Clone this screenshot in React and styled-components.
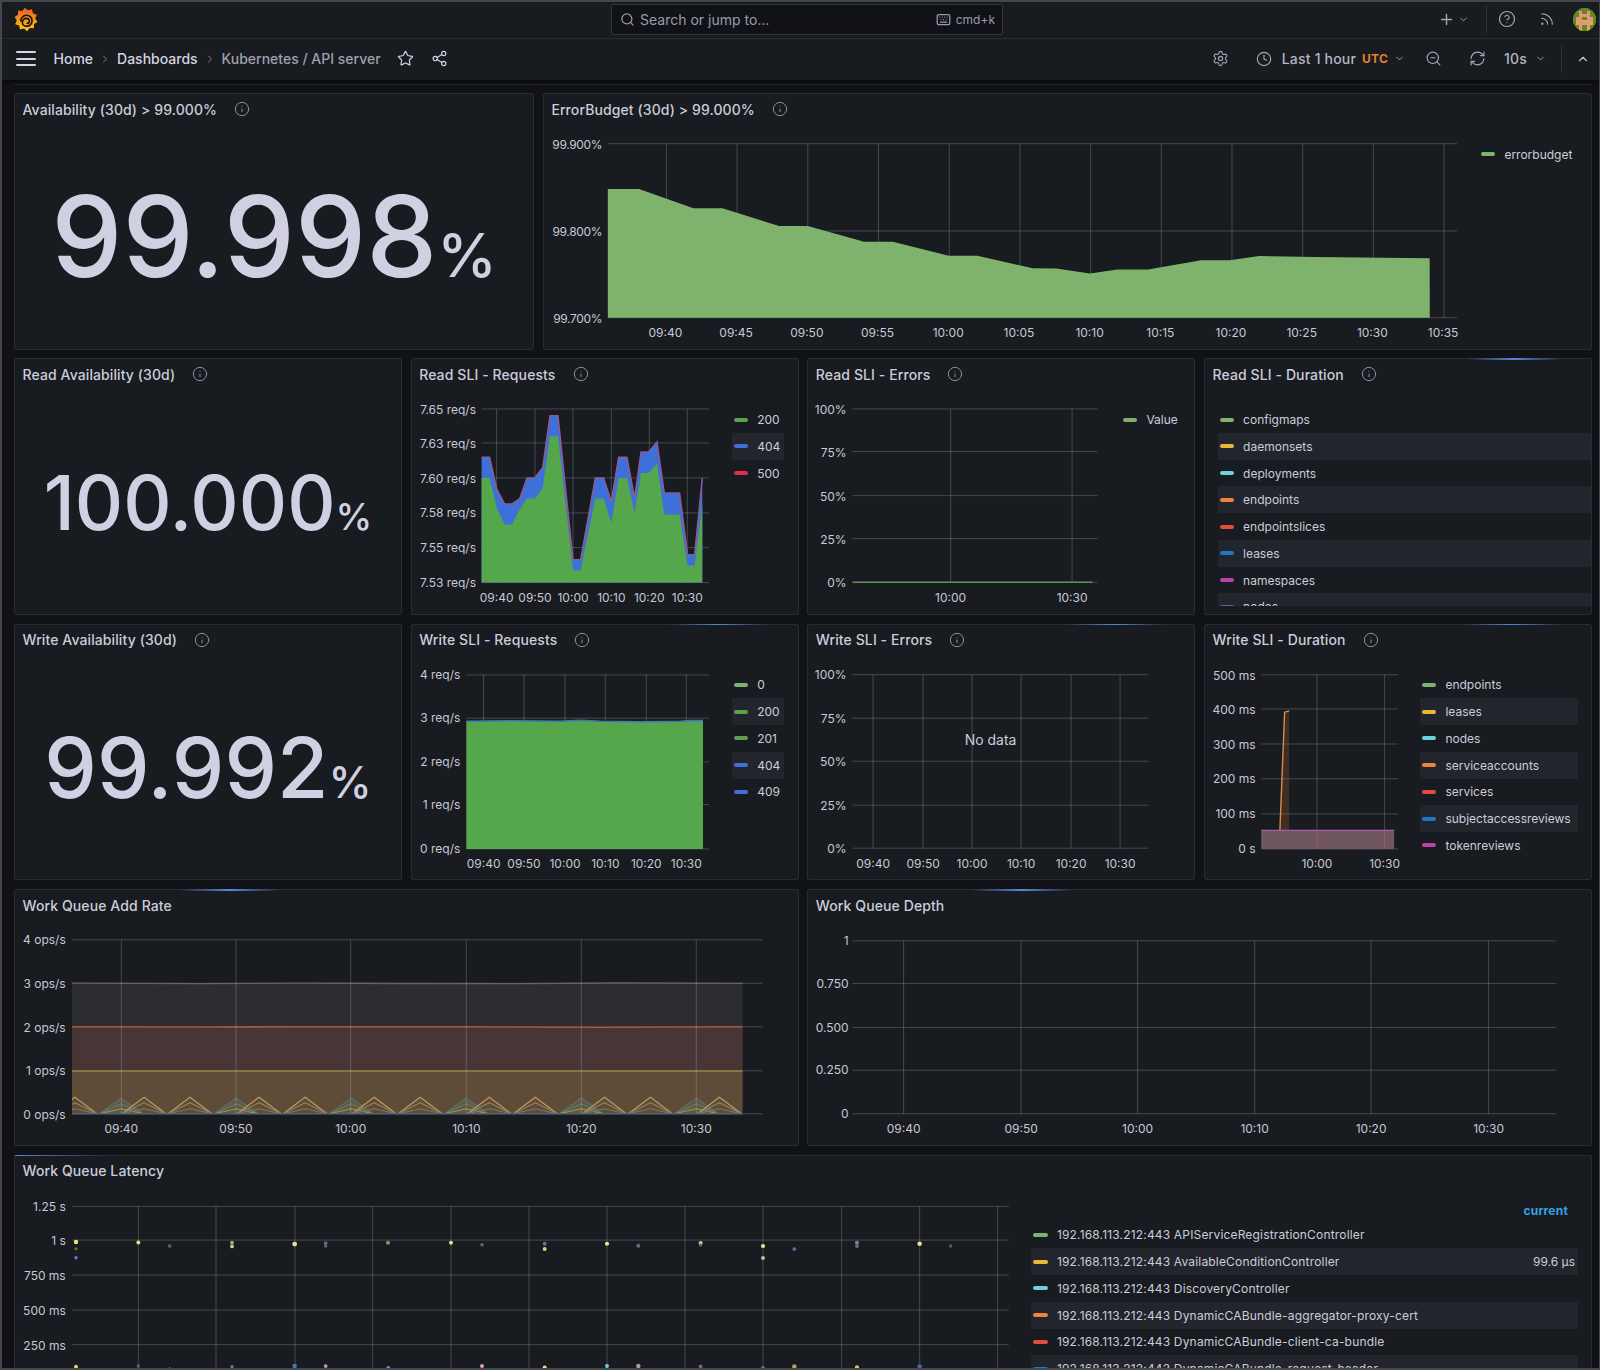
import React from 'react';
import styled, { createGlobalStyle } from 'styled-components';
import { Search, Keyboard, Plus, ChevronDown, ChevronRight, ChevronUp, CircleHelp, Rss, Star, Share2, Settings, Clock, ZoomOut, RefreshCw, Info } from 'lucide-react';

const Global = createGlobalStyle`
  html, body { margin: 0; padding: 0; background: #111217; }
  * { box-sizing: border-box; }
`;

const Root = styled.div`
  width: 1600px; height: 1370px; overflow: hidden;
  border: 2px solid #45464b; border-right-width: 1px;
  background: #111217; color: #ccccdc;
  font-family: Inter, "Noto Sans", sans-serif;
`;
const TopBar = styled.header`
  height: 37px; display: flex; align-items: center; padding-bottom: 2px;
  background: #181b1f; border-bottom: 1px solid #2b2d32;
`;
const LogoSlot = styled.div`
  width: 609px; height: 100%; display: flex; align-items: center; padding-left: 12px;
`;
const SearchBox = styled.div`
  width: 392px; height: 31px; display: flex; align-items: center;
  background: #111217; border: 1px solid #33353a; border-radius: 2px;
  padding: 0 7px 0 8px; color: #9a9ba8; font-size: 14px;
`;
const SearchText = styled.span`margin-left: 5px; flex: 1;`;
const Shortcut = styled.span`font-size: 12px; margin-left: 5px;`;
const TopRight = styled.div`
  flex: 1; display: flex; justify-content: flex-end; align-items: center; padding-right: 3px; color: #a5a6b3;
`;
const Nudge = styled.span`
  display: inline-flex; align-items: center; margin-left: ${p => p.$ml || 0}px; color: ${p => p.$color || 'inherit'};
`;
const VRule = styled.span`
  width: 1px; height: ${p => p.$h}px; background: #2f3136; margin-left: ${p => p.$ml}px;
`;
const NavBar = styled.nav`
  height: 41px; display: flex; align-items: center; padding: 0 9px 2px 14px;
  background: #181b1f; box-shadow: 0 2px 3px rgba(0,0,0,.5); position: relative;
`;
const Burger = styled.span`
  width: 20px; display: flex; flex-direction: column; gap: 4.5px; margin-right: 17.5px;
`;
const BurgerBar = styled.span`height: 2px; background: #d6d6e2; border-radius: 1px;`;
const Crumb = styled.span`
  font-size: 14px; font-weight: 500; color: ${p => p.$dim ? '#9fa0ad' : '#d4d4e0'};
`;
const CrumbSep = styled.span`
  display: inline-flex; width: 24px; justify-content: center; color: #7d7e8a;
`;
const NavSpacer = styled.span`flex: 1;`;
const NavText = styled.span`
  font-size: 14px; font-weight: 500; letter-spacing: .2px; color: ${p => p.$color || '#b5b6c3'}; margin-left: ${p => p.$ml || 0}px;
  ${p => p.$small && 'font-size: 12px; font-weight: 700;'}
`;
const Scroller = styled.main`
  margin: 4px 7px 0 12px; border-top: 1px solid #212327; padding-top: 8px;
`;
const Dashboard = styled.div`
  display: grid; grid-template-columns: repeat(24, 1fr); grid-auto-rows: 256.7px; gap: 8.7px;
`;
const Panel = styled.section`
  grid-column: span ${p => p.$span};
  position: relative; display: flex; flex-direction: column; min-width: 0;
  background: #181b1f; border: 1px solid #2a2c31; border-radius: 2px;
  ${p => p.$glow !== undefined && `
    &::before {
      content: ''; position: absolute; top: -1px; height: 1.5px;
      left: ${p.$glow}px; width: ${p.$glowW}px;
      background: linear-gradient(90deg, ${p.$glow === 0 ? '#5a86d8' : 'transparent'}, ${p.$glow === 0 ? 'transparent' : '#5a86d8, transparent'});
    }
  `}
`;
const PanelHeader = styled.div`
  height: 32px; flex: none; display: flex; align-items: center; padding: 0 7.5px 2px;
`;
const PanelTitle = styled.h2`
  margin: 0; font-size: 14px; font-weight: 500; letter-spacing: .1px; color: #ccccdc; white-space: nowrap;
`;
const InfoMark = styled(Info)`
  width: 16px; height: 16px; margin-left: 17px; color: #8e8f9c;
`;
const PanelBody = styled.div`
  flex: 1; min-height: 0; display: flex; overflow: hidden;
`;
const StatBody = styled.div`
  flex: 1; display: flex; align-items: center; justify-content: center; padding-bottom: 1px;
`;
const StatValue = styled.span`
  font-size: ${p => p.$size}px; font-weight: 500; line-height: 1; color: #d0d0e2; white-space: nowrap;
`;
const StatUnit = styled.span`
  font-size: ${p => p.$size}px;
`;
const ChartSvg = styled.svg`display: block; flex: none;`;
const AxisLabel = styled.text`
  font-family: Inter, sans-serif; font-size: 12px; fill: #c8c8d6; letter-spacing: ${p => p.$track || 0}px;
`;
const NoData = styled.text`
  font-family: Inter, sans-serif; font-size: 14px; fill: #ccccdc;
`;
const Legend = styled.ul`
  list-style: none; margin: 0; padding: ${p => p.$top ?? 14.8}px 0 0 ${p => p.$left || 0}px;
  flex: none; width: ${p => p.$width}px; ${p => p.$clip && `height: ${p.$clip}px; overflow: hidden;`}
`;
const LegendRow = styled.li`
  height: 26.75px; display: flex; align-items: center; padding: 0 3px 0 2px; font-size: 12px; color: #ccccdc; white-space: nowrap;
  &:nth-child(even) { background: #22252b; }
`;
const Swatch = styled.i`
  width: 14.5px; height: 4px; border-radius: 2px; margin-right: 9px; flex: none; background: ${p => p.$color};
`;
const RowLabel = styled.span`flex: 1; letter-spacing: ${p => p.$track || 0}px;`;
const RowValue = styled.span`color: #ccccdc;`;
const LegendHead = styled.div`
  height: 22.5px; display: flex; align-items: center; justify-content: flex-end; padding-right: 10px;
  font-size: 12px; font-weight: 700; letter-spacing: .2px; color: #33a2e5;
`;
const LegendTable = styled.div`flex: none; width: 546.6px; padding-top: 11.5px;`;
const LegendList = styled.ul`list-style: none; margin: 0; padding: 0;`;

const PAL = { green: '#7eb26d', yellow: '#eab839', cyan: '#6ed0e0', orange: '#ef843c', red: '#e24d42', blue: '#1f78c1', pink: '#ba43a9', purple: '#705da0' };

const z = (ox, oy, pts, sx = 3, sy = 3) => pts.map(([x, y]) => `${(ox + x / sx).toFixed(1)},${(oy + y / sy).toFixed(1)}`).join(' ');
const GRID = 'rgba(204,204,220,0.26)';

const GridLines = ({ hs = [], vs = [], x1, x2, y1, y2 }) => (
  <g stroke={GRID} strokeWidth="1">
    {hs.map(y => <line key={'h' + y} x1={x1} x2={x2} y1={y} y2={y} />)}
    {vs.map(x => <line key={'v' + x} x1={x} x2={x} y1={y1} y2={y2} />)}
  </g>
);
const YLabels = ({ x, items, track }) => items.map(([t, y]) => (
  <AxisLabel key={t} x={x} y={y + 4.3} textAnchor="end" $track={track}>{t}</AxisLabel>
));
const XLabels = ({ y, items }) => items.map(([t, x]) => (
  <AxisLabel key={t} x={x} y={y + 4.3} textAnchor="middle">{t}</AxisLabel>
));
const Chart = ({ box, children }) => (
  <ChartSvg width={box[2]} height={box[3]} viewBox={box.join(' ')}>{children}</ChartSvg>
);

const GrafanaLogo = () => {
  const pts = [];
  const n = 10;
  for (let i = 0; i < n * 2; i++) {
    const a = (i / (n * 2)) * Math.PI * 2 - Math.PI / 2 - 0.1;
    const r = i % 2 === 0 ? 11.8 : 9.3;
    pts.push(`${(12 + r * Math.cos(a)).toFixed(2)},${(12.4 + r * Math.sin(a)).toFixed(2)}`);
  }
  return (
    <svg width="24" height="25" viewBox="0 0 24 25">
      <defs>
        <linearGradient id="gflogo" x1="0" y1="0" x2="0" y2="1">
          <stop offset="0" stopColor="#f05a28" />
          <stop offset="1" stopColor="#fbca0a" />
        </linearGradient>
      </defs>
      <polygon points={pts.join(' ')} fill="url(#gflogo)" />
      <path d="M6.9 14a5.6 5.6 0 1 1 5.8 5.4c-2.6 0-4.3-1.9-4.3-4.1a3.9 3.9 0 0 1 3.9-3.9c1.9 0 3.1 1.3 3.1 2.8 0 1.2-.9 2.2-2.2 2.2" fill="none" stroke="#17130f" strokeWidth="1.6" strokeLinecap="round" />
    </svg>
  );
};

const AVATAR = [
  '..gggg..',
  '.gPggPg.',
  'ggPPPPgg',
  'gPPggPPg',
  'gPPyyPPg',
  'gyPPPPyg',
  '.gPggPg.',
  '..yggy..',
];
const AVATAR_COLORS = { g: '#5f8a22', P: '#e9937c', y: '#d8b03a' };
const Avatar = () => (
  <svg width="23" height="23" viewBox="0 0 8 8" shapeRendering="crispEdges">
    <defs><clipPath id="avatarclip"><circle cx="4" cy="4" r="4" /></clipPath></defs>
    <g clipPath="url(#avatarclip)">
      <rect width="8" height="8" fill="#5f8a22" />
      {AVATAR.flatMap((row, y) => row.split('').map((c, x) => AVATAR_COLORS[c] ? <rect key={x + '-' + y} x={x} y={y} width="1" height="1" fill={AVATAR_COLORS[c]} /> : null))}
    </g>
  </svg>
);

const ErrorBudgetChart = () => {
  const first = [[203, 297], [297, 297], [460, 355], [547, 355], [717, 408], [803, 408], [972, 455], [1058, 455], [1226, 497], [1312, 497], [1478, 535]];
  const rest = [[1035, 263], [1068, 268], [1095, 264], [1125, 264], [1177, 255], [1205, 255], [1234, 251], [1290, 252], [1401, 253]];
  const pts = z(540, 90, first) + ' ' + rest.map(([x, y]) => `${(x * 1.0204).toFixed(1)},${(y * 1.0204).toFixed(1)}`).join(' ');
  const xs = Array.from({ length: 12 }, (_, i) => 666.3 + 70.7 * i);
  const labels = ['09:40', '09:45', '09:50', '09:55', '10:00', '10:05', '10:10', '10:15', '10:20', '10:25', '10:30', '10:35'];
  return (
    <Chart box={[543.9, 126.0, 935, 222.7]}>
      <GridLines hs={[143.7, 231, 317.7]} vs={xs} x1={607.7} x2={1457} y1={143.7} y2={317.7} />
      <polygon points={`607.7,317.7 ${pts} 1429.7,317.7`} fill="#7eb26d" />
      <YLabels x={602} track={-0.35} items={[['99.900%', 144.6], ['99.800%', 231.9], ['99.700%', 318.6]]} />
      <XLabels y={333} items={labels.map((t, i) => [t, xs[i] - 1])} />
    </Chart>
  );
};

const ReadRequestsChart = () => {
  const top = [[244, 308], [268, 308], [290, 405], [313, 448], [335, 448], [358, 433], [380, 370], [403, 370], [427, 340], [449, 183], [473, 183], [518, 615], [541, 615], [585, 370], [610, 370], [633, 440], [655, 308], [680, 308], [703, 430], [722, 292], [745, 292], [770, 262], [792, 415], [838, 415], [862, 600], [883, 600], [906, 370]];
  const mid = [[244, 370], [268, 370], [290, 462], [313, 510], [335, 510], [358, 465], [380, 432], [403, 432], [427, 402], [449, 245], [473, 245], [518, 648], [541, 648], [585, 432], [610, 432], [633, 505], [655, 370], [680, 370], [703, 475], [722, 355], [745, 355], [770, 327], [792, 480], [838, 480], [862, 633], [883, 633], [906, 450]];
  const base = [[906, 684], [244, 684]];
  const xs = [496.3, 534.7, 572.7, 611, 649, 687];
  const labels = ['09:40', '09:50', '10:00', '10:10', '10:20', '10:30'];
  return (
    <Chart box={[411.7, 391.4, 320, 222.7]}>
      <GridLines hs={[409.3, 443.3, 478.3, 513.3, 548, 583]} vs={xs} x1={481.3} x2={709} y1={409.3} y2={583} />
      <polygon points={z(400, 355, [...top, ...base])} fill="#3d71d9" />
      <polygon points={z(400, 355, [...mid, ...base])} fill="#56a64b" />
      <polyline points={z(400, 355, top)} fill="none" stroke="#94598f" strokeWidth="1.4" />
      <YLabels x={475.7} items={[['7.65 req/s', 409.8], ['7.63 req/s', 444.5], ['7.60 req/s', 479], ['7.58 req/s', 513.5], ['7.55 req/s', 548.3], ['7.53 req/s', 583]]} />
      <XLabels y={598} items={labels.map((t, i) => [t, xs[i]])} />
    </Chart>
  );
};

const ReadErrorsChart = () => (
  <Chart box={[808.4, 391.4, 312.6, 222.7]}>
    <GridLines hs={[409.3, 452, 496, 539, 582.7]} vs={[951, 1072.5]} x1={853} x2={1098} y1={409.3} y2={582.7} />
    <line x1={853} x2={1093} y1={582.7} y2={582.7} stroke="#5f8f52" strokeWidth="1.4" />
    <YLabels x={847} items={[['100%', 410.2], ['75%', 452.9], ['50%', 496.9], ['25%', 539.9], ['0%', 583.6]]} />
    <XLabels y={598.5} items={[['10:00', 951], ['10:30', 1072.5]]} />
  </Chart>
);

const WriteRequestsChart = () => {
  const xs = [483.3, 523.7, 564.7, 605, 646, 686];
  const labels = ['09:40', '09:50', '10:00', '10:10', '10:20', '10:30'];
  const surface = '466,721 510,720.6 560,721 580,720 600,721 640,721.5 680,721 690,720.4 702.7,720.4';
  return (
    <Chart box={[411.7, 656.8, 320, 222.7]}>
      <GridLines hs={[674.7, 718, 761.7, 804.3, 848.7]} vs={xs} x1={466} x2={709} y1={674.7} y2={848.7} />
      <polygon points={`${surface} 702.7,848.7 466,848.7`} fill="#56a64b" />
      <polyline points={surface} fill="none" stroke="#3f78b5" strokeWidth="1.6" />
      <YLabels x={460} items={[['4 req/s', 675], ['3 req/s', 718], ['2 req/s', 762], ['1 req/s', 804.7], ['0 req/s', 848.7]]} />
      <XLabels y={864} items={labels.map((t, i) => [t, xs[i]])} />
    </Chart>
  );
};

const WriteErrorsChart = () => {
  const xs = [873.5, 923.5, 972.5, 1021.5, 1071.5, 1120.5];
  const labels = ['09:40', '09:50', '10:00', '10:10', '10:20', '10:30'];
  return (
    <Chart box={[808.4, 656.8, 386, 222.7]}>
      <GridLines hs={[674.5, 718, 761, 805, 848]} vs={xs} x1={853} x2={1149} y1={674.5} y2={848} />
      <YLabels x={847} items={[['100%', 675], ['75%', 718.5], ['50%', 761.5], ['25%', 805.5], ['0%', 848.6]]} />
      <XLabels y={864} items={labels.map((t, i) => [t, xs[i]])} />
      <NoData x={991} y={744.5} textAnchor="middle">No data</NoData>
    </Chart>
  );
};

const WriteDurationChart = () => (
  <Chart box={[1205.1, 656.8, 214.9, 222.7]}>
    <GridLines hs={[674.6, 708.7, 743.8, 778.6, 813.7, 848.8]} vs={[1317, 1384.7]} x1={1261.3} x2={1398.3} y1={674.6} y2={848.8} />
    <polygon points="1280,830 1284.7,712 1289.3,710.7 1289.3,830" fill="rgba(239,132,60,.18)" />
    <rect x={1261.3} y={830.2} width={133} height={18.6} fill="#6f5660" />
    <line x1={1317} x2={1317} y1={830.2} y2={848.8} stroke="rgba(239,132,60,.25)" />
    <line x1={1384.7} x2={1384.7} y1={830.2} y2={848.8} stroke="rgba(239,132,60,.25)" />
    <polyline points="1280,830 1284.7,712 1289.3,710.7" fill="none" stroke="#d98a55" strokeWidth="1.4" />
    <line x1={1261.3} x2={1394.3} y1={830.2} y2={830.2} stroke="#ad5ca6" strokeWidth="1.4" />
    <YLabels x={1255.7} items={[['500 ms', 675.4], ['400 ms', 710], ['300 ms', 744.5], ['200 ms', 779], ['100 ms', 814], ['0 s', 849]]} />
    <XLabels y={863.6} items={[['10:00', 1317], ['10:30', 1384.7]]} />
  </Chart>
);

const Peak = ({ cx, h, color, fill }) => (
  <polyline points={`${cx - 22},1114 ${cx},${1114 - h} ${cx + 22},1114`} fill={fill || 'none'} stroke={color} strokeWidth="1.2" />
);
const AddRateChart = () => {
  const xs = [121.3, 236, 350.7, 466.3, 581.3, 696.3];
  const labels = ['09:40', '09:50', '10:00', '10:10', '10:20', '10:30'];
  const orange = [];
  for (let k = 0; k < 6; k++) orange.push(144 + 115.1 * k);
  for (let k = -1; k < 5; k++) orange.push(190 + 115.1 * k);
  const gray = [0, 1, 2, 3, 4, 5].map(k => 121.3 + 115 * k);
  return (
    <Chart box={[15, 922.2, 782.6, 222.7]}>
      <defs><clipPath id="addrate"><rect x={72} y={975} width={670.7} height={145} /></clipPath></defs>
      <GridLines hs={[940, 983.5, 1027, 1071, 1114]} x1={72} x2={762.7} />
      <rect x={72} y={983.5} width={670.7} height={43.5} fill="#2c2d33" />
      <rect x={72} y={1027} width={670.7} height={44} fill="#4a3536" />
      <rect x={72} y={1071} width={670.7} height={43} fill="#5e4c38" />
      <g clipPath="url(#addrate)">
        {gray.map(c => (
          <g key={c}>
            <Peak cx={c} h={15.5} color="#5a7068" fill="rgba(95,122,114,.25)" />
            <Peak cx={c} h={10} color="#66805a" />
            <Peak cx={c} h={5} color="#a09458" />
          </g>
        ))}
        {orange.map(c => (
          <g key={c}>
            <Peak cx={c} h={16.5} color="#c39a5a" />
            <Peak cx={c} h={11} color="#8f7f60" />
            <Peak cx={c} h={5} color="#85745f" />
          </g>
        ))}
      </g>
      <polyline points="72,983.4 200,983.8 300,983.3 400,983.7 520,983.9 620,983.2 742.7,983.5" fill="none" stroke="#6f6068" strokeWidth="1.3" />
      <polyline points="72,1027 200,1027.2 300,1026.9 460,1027 600,1027.4 742.7,1027" fill="none" stroke="#a8593f" strokeWidth="1.6" />
      <line x1={72} x2={742.7} y1={1071.2} y2={1071.2} stroke="#85774a" strokeWidth="2" />
      <line x1={72} x2={742.7} y1={1114} y2={1114} stroke="#4d6474" strokeWidth="1.6" />
      <GridLines vs={xs} y1={940} y2={1114} />
      <YLabels x={65.7} items={[['4 ops/s', 940], ['3 ops/s', 983.5], ['2 ops/s', 1027.5], ['1 ops/s', 1070.5], ['0 ops/s', 1114.5]]} />
      <XLabels y={1129.3} items={labels.map((t, i) => [t, xs[i]])} />
    </Chart>
  );
};

const DepthChart = () => {
  const xs = [904, 1021.5, 1138, 1255, 1371.5, 1489];
  const labels = ['09:40', '09:50', '10:00', '10:10', '10:20', '10:30'];
  return (
    <Chart box={[808.4, 922.2, 783, 222.7]}>
      <GridLines hs={[941, 983.7, 1027.6, 1070.4, 1114]} vs={xs} x1={853} x2={1556} y1={941} y2={1114} />
      <YLabels x={849} items={[['1', 941], ['0.750', 983.7], ['0.500', 1027.6], ['0.250', 1070.4], ['0', 1114]]} />
      <XLabels y={1129.3} items={labels.map((t, i) => [t, xs[i]])} />
    </Chart>
  );
};

const DOTS_L = [[228, 725, '#eee58a', 2.2], [228, 745, '#5f7a3c', 1.6], [228, 772, '#7f6fc0', 1.7], [415, 726, '#e8dc8a', 2], [509, 737, '#5d6a6a', 1.7], [696, 727, '#7cc07a', 1.9], [696, 738, '#c8cf80', 1.9], [884, 731, '#e8e090', 2.4], [977, 728, '#6468a8', 1.9], [977, 737, '#5d6a6a', 1.7], [1164, 727, '#7a9a58', 2.1], [1353, 727, '#e8e090', 2], [1446, 733, '#50706a', 1.8], [228, 1099, '#dfe05c', 1.9], [415, 1097, '#585c98', 1.7], [509, 1106, '#c8c8c8', 1.5], [696, 1098, '#6a6a80', 1.7], [696, 1106, '#c8c8c8', 1.5], [884, 1097, '#3d78c0', 2.2], [977, 1097, '#d88ac8', 1.9], [1165, 1103, '#5f90d0', 2], [1446, 1097, '#e09aa8', 2]];
const DOTS_R = [[134, 190, '#706ca0', 2], [134, 206, '#c8d880', 2], [321, 190, '#f0e090', 2.1], [415, 196, '#666a80', 2], [602, 188, '#c8c8a0', 2.1], [602, 194, '#6a6a60', 1.6], [789, 197, '#e8dc90', 2.1], [789, 233, '#b8c880', 2], [883, 206, '#6468b0', 1.9], [1071, 187, '#808078', 2.1], [1071, 197, '#6a6ca0', 1.9], [1259, 190, '#efe090', 2.3], [1352, 197, '#505a58', 1.8], [134, 561, '#efe090', 2], [321, 557, '#6ec8e8', 2], [415, 557, '#a8a0a0', 2.2], [602, 558, '#70707a', 1.9], [789, 563, '#4878b0', 2], [883, 558, '#b0a860', 2.2], [1071, 561, '#f0b860', 2.1], [1259, 558, '#4868a0', 2.2], [1352, 568, '#c8c8c8', 1.5]];
const LatencyChart = () => {
  const xs = [138.3, 216, 295, 372.7, 451, 529, 607, 685, 763, 841.7, 919.7, 997.7];
  return (
    <Chart box={[15, 1187.6, 1016.4, 222.7]}>
      <GridLines hs={[1206, 1239.7, 1274.7, 1309.7, 1344.3, 1379]} vs={xs} x1={72} x2={1008.8} y1={1206} y2={1379} />
      {DOTS_L.map(([x, y, c, r], i) => <circle key={'l' + i} cx={x / 3} cy={1000 + y / 3} r={r} fill={c} />)}
      {DOTS_R.map(([x, y, c, r], i) => <circle key={'r' + i} cx={500 + x / 3} cy={1180 + y / 3} r={r} fill={c} />)}
      <YLabels x={65.7} items={[['1.25 s', 1206], ['1 s', 1240.5], ['750 ms', 1275], ['500 ms', 1310], ['250 ms', 1345]]} />
    </Chart>
  );
};

const LegendBlock = ({ items, ...rest }) => (
  <Legend {...rest}>
    {items.map(([label, color]) => (
      <LegendRow key={label}><Swatch $color={color} /><RowLabel>{label}</RowLabel></LegendRow>
    ))}
  </Legend>
);

const Title = ({ text, info = true }) => (
  <PanelHeader>
    <PanelTitle>{text}</PanelTitle>
    {info && <InfoMark strokeWidth={1.5} />}
  </PanelHeader>
);

const LATENCY = [
  ['192.168.113.212:443 APIServiceRegistrationController', PAL.green, ''],
  ['192.168.113.212:443 AvailableConditionController', PAL.yellow, '99.6 µs'],
  ['192.168.113.212:443 DiscoveryController', PAL.cyan, ''],
  ['192.168.113.212:443 DynamicCABundle-aggregator-proxy-cert', PAL.orange, ''],
  ['192.168.113.212:443 DynamicCABundle-client-ca-bundle', PAL.red, ''],
  ['192.168.113.212:443 DynamicCABundle-request-header', PAL.blue, ''],
];

export default function App() {
  return (
    <Root>
      <Global />
      <TopBar>
        <LogoSlot><GrafanaLogo /></LogoSlot>
        <SearchBox>
          <Search size={15} />
          <SearchText>Search or jump to...</SearchText>
          <Keyboard size={15} />
          <Shortcut>cmd+k</Shortcut>
        </SearchBox>
        <TopRight>
          <Plus size={17} />
          <Nudge $ml={3}><ChevronDown size={11} /></Nudge>
          <VRule $h={28} $ml={17} />
          <Nudge $ml={11}><CircleHelp size={18} strokeWidth={1.6} /></Nudge>
          <Nudge $ml={23}><Rss size={16} strokeWidth={1.6} /></Nudge>
          <Nudge $ml={18}><Avatar /></Nudge>
        </TopRight>
      </TopBar>
      <NavBar>
        <Burger><BurgerBar /><BurgerBar /><BurgerBar /></Burger>
        <Crumb>Home</Crumb>
        <CrumbSep><ChevronRight size={12} /></CrumbSep>
        <Crumb>Dashboards</Crumb>
        <CrumbSep><ChevronRight size={12} /></CrumbSep>
        <Crumb $dim>Kubernetes / API server</Crumb>
        <Nudge $ml={16} $color="#d4d4e0"><Star size={17} strokeWidth={1.7} /></Nudge>
        <Nudge $ml={17} $color="#d4d4e0"><Share2 size={17} strokeWidth={1.6} /></Nudge>
        <NavSpacer />
        <Nudge $color="#a5a6b3"><Settings size={17} strokeWidth={1.6} /></Nudge>
        <Nudge $ml={27} $color="#a5a6b3"><Clock size={16} strokeWidth={1.7} /></Nudge>
        <NavText $ml={10}>Last 1 hour</NavText>
        <NavText $ml={6} $small $color="#e0832c">UTC</NavText>
        <Nudge $ml={6} $color="#a5a6b3"><ChevronDown size={11} /></Nudge>
        <Nudge $ml={20} $color="#a5a6b3"><ZoomOut size={17} strokeWidth={1.6} /></Nudge>
        <Nudge $ml={27} $color="#a5a6b3"><RefreshCw size={17} strokeWidth={1.6} /></Nudge>
        <NavText $ml={18}>10s</NavText>
        <Nudge $ml={8} $color="#a5a6b3"><ChevronDown size={11} /></Nudge>
        <VRule $h={28} $ml={15} />
        <Nudge $ml={14} $color="#c5c6d0"><ChevronUp size={14} /></Nudge>
      </NavBar>
      <Scroller>
        <Dashboard>
          <Panel $span={8}>
            <Title text="Availability (30d) > 99.000%" />
            <StatBody><StatValue $size={113}>99.998<StatUnit $size={60}>%</StatUnit></StatValue></StatBody>
          </Panel>
          <Panel $span={16}>
            <Title text="ErrorBudget (30d) > 99.000%" />
            <PanelBody>
              <ErrorBudgetChart />
              <LegendBlock $width={112} items={[['errorbudget', PAL.green]]} />
            </PanelBody>
          </Panel>

          <Panel $span={6}>
            <Title text="Read Availability (30d)" />
            <StatBody><StatValue $size={75}>100.000<StatUnit $size={37}>%</StatUnit></StatValue></StatBody>
          </Panel>
          <Panel $span={6}>
            <Title text="Read SLI - Requests" />
            <PanelBody>
              <ReadRequestsChart />
              <LegendBlock $width={52.6} items={[['200', '#56a64b'], ['404', '#3d71d9'], ['500', '#e02f44']]} />
            </PanelBody>
          </Panel>
          <Panel $span={6}>
            <Title text="Read SLI - Errors" />
            <PanelBody>
              <ReadErrorsChart />
              <LegendBlock $width={70} items={[['Value', PAL.green]]} />
            </PanelBody>
          </Panel>
          <Panel $span={6} $glow={262} $glowW={95}>
            <Title text="Read SLI - Duration" />
            <PanelBody>
              <LegendBlock $left={12.6} $width={386} $clip={215} items={[['configmaps', PAL.green], ['daemonsets', PAL.yellow], ['deployments', PAL.cyan], ['endpoints', PAL.orange], ['endpointslices', PAL.red], ['leases', PAL.blue], ['namespaces', PAL.pink], ['nodes', PAL.purple]]} />
            </PanelBody>
          </Panel>

          <Panel $span={6}>
            <Title text="Write Availability (30d)" />
            <StatBody><StatValue $size={83.5}>99.992<StatUnit $size={43.5}>%</StatUnit></StatValue></StatBody>
          </Panel>
          <Panel $span={6} $glow={258} $glowW={97}>
            <Title text="Write SLI - Requests" />
            <PanelBody>
              <WriteRequestsChart />
              <LegendBlock $width={52.6} items={[['0', PAL.green], ['200', '#56a64b'], ['201', '#629e51'], ['404', '#3d71d9'], ['409', '#3d71d9']]} />
            </PanelBody>
          </Panel>
          <Panel $span={6} $glow={258} $glowW={97}>
            <Title text="Write SLI - Errors" />
            <PanelBody><WriteErrorsChart /></PanelBody>
          </Panel>
          <Panel $span={6} $glow={258} $glowW={97}>
            <Title text="Write SLI - Duration" />
            <PanelBody>
              <WriteDurationChart />
              <LegendBlock $width={157.7} items={[['endpoints', PAL.green], ['leases', PAL.yellow], ['nodes', PAL.cyan], ['serviceaccounts', PAL.orange], ['services', PAL.red], ['subjectaccessreviews', PAL.blue], ['tokenreviews', PAL.pink]]} />
            </PanelBody>
          </Panel>

          <Panel $span={12} $glow={164} $glowW={102}>
            <Title text="Work Queue Add Rate" info={false} />
            <PanelBody><AddRateChart /></PanelBody>
          </Panel>
          <Panel $span={12} $glow={163} $glowW={102}>
            <Title text="Work Queue Depth" info={false} />
            <PanelBody><DepthChart /></PanelBody>
          </Panel>

          <Panel $span={24} $glow={0} $glowW={90}>
            <Title text="Work Queue Latency" info={false} />
            <PanelBody>
              <LatencyChart />
              <LegendTable>
                <LegendHead>current</LegendHead>
                <LegendList>
                  {LATENCY.map(([label, color, value]) => (
                    <LegendRow key={label}>
                      <Swatch $color={color} />
                      <RowLabel $track={0.17}>{label}</RowLabel>
                      <RowValue>{value}</RowValue>
                    </LegendRow>
                  ))}
                </LegendList>
              </LegendTable>
            </PanelBody>
          </Panel>
        </Dashboard>
      </Scroller>
    </Root>
  );
}
